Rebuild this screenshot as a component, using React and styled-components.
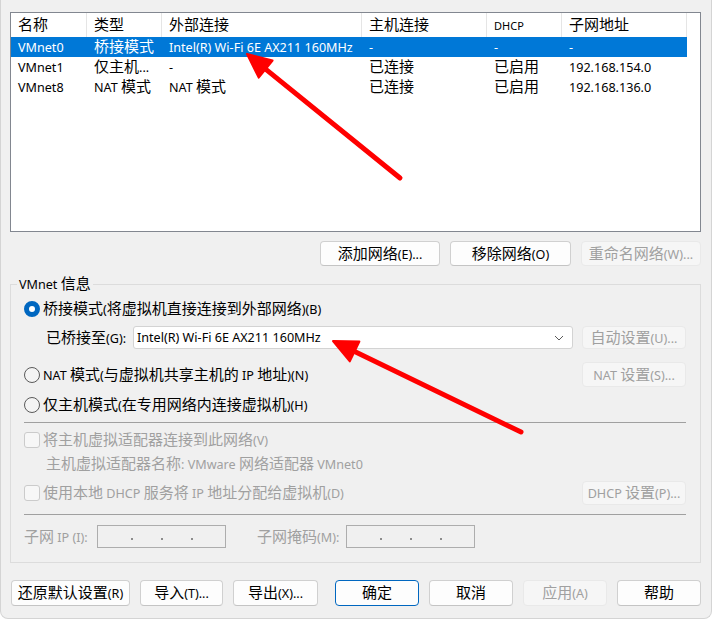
import React from 'react';
import styled, { createGlobalStyle } from 'styled-components';

const GlobalStyle = createGlobalStyle`
  html, body {
    margin: 0;
    padding: 0;
    background: #ffffff;
  }
  body {
    font-family: "Noto Sans", "Noto Sans CJK SC", sans-serif;
    font-size: 12.6px;
    color: #000;
  }
`;

// CJK runs are drawn a little larger than the latin text, as on Windows
const HAN = /([\u2e80-\u9fff\uff00-\uffef]+)/;

const Han = styled.span`
  font-family: "Noto Sans CJK SC", sans-serif;
  font-size: 15px;
  line-height: 1;
`;

const Text = styled.span`
  position: relative;
  top: 1px;
  white-space: pre;
`;

const txt = (s) => (
  <Text>{s.split(HAN).map((p, i) => (i % 2 ? <Han key={i}>{p}</Han> : p))}</Text>
);

const Window = styled.div`
  position: relative;
  box-sizing: border-box;
  width: 712px;
  height: 619px;
  background: #f0f0f0;
  border: 1px solid #d4d4d4;
  border-top: none;
  border-radius: 0 0 8px 8px;
  padding: 12px 10px 0 9px;
  overflow: hidden;
  line-height: 20px;
`;

const ListView = styled.div`
  box-sizing: border-box;
  height: 220px;
  border: 1px solid #828790;
  background: #fff;
`;

const ListRow = styled.div`
  display: grid;
  grid-template-columns: 76px 75px 200px 125px 75px 125px;
  width: 676px;
  height: ${(p) => (p.$head ? 24 : 20)}px;
  background: ${(p) => (p.$selected ? '#0078d7' : 'transparent')};
  color: ${(p) => (p.$selected ? '#fff' : '#000')};
`;

const Cell = styled.div`
  box-sizing: border-box;
  display: flex;
  align-items: center;
  padding-left: 7px;
  white-space: nowrap;
  border-right: ${(p) => (p.$head ? '1px solid #e5e5e5' : 'none')};
  font-size: ${(p) => (p.$small ? '11px' : 'inherit')};
`;

const ButtonBar = styled.div`
  display: flex;
  justify-content: flex-end;
  gap: 10px;
  margin-top: 9px;
`;

const Button = styled.button`
  box-sizing: border-box;
  flex: none;
  width: ${(p) => p.$w}px;
  height: ${(p) => p.$h || 25}px;
  padding: 0;
  font: inherit;
  line-height: 20px;
  display: flex;
  align-items: center;
  justify-content: center;
  white-space: nowrap;
  background: ${(p) => (p.disabled ? '#f6f6f6' : '#fdfdfd')};
  border: 1px solid ${(p) => (p.disabled ? '#e9e9e9' : p.$primary ? '#0067c0' : '#d0d0d0')};
  border-bottom-color: ${(p) => (p.disabled ? '#e9e9e9' : p.$primary ? '#0067c0' : '#c4c4c4')};
  border-radius: 4px;
  color: ${(p) => (p.disabled ? '#a0a0a0' : '#000')};
  margin-left: ${(p) => (p.$push ? 'auto' : '0')};
`;

const Group = styled.fieldset`
  margin: 8px 0 0 0;
  padding: 0;
  min-width: 0;
  border: 1px solid #dcdcdc;
`;

const Legend = styled.legend`
  margin-left: 6px;
  padding: 0 2px;
  height: 20px;
  line-height: 20px;
`;

const GroupBody = styled.div`
  display: flex;
  flex-direction: column;
  padding: 3px 14px 14px 13px;
`;

const Row = styled.div`
  display: flex;
  align-items: center;
  height: ${(p) => p.$h}px;
  margin-top: ${(p) => p.$top || 0}px;
  color: ${(p) => (p.$muted ? '#a0a0a0' : '#000')};
  padding-left: ${(p) => p.$indent || 0}px;
  white-space: nowrap;
`;

const Separator = styled.div`
  height: 0;
  border-top: 1px solid #a0a0a0;
  margin-top: ${(p) => p.$top}px;
`;

const Radio = styled.span`
  box-sizing: border-box;
  flex: none;
  width: 16px;
  height: 16px;
  border-radius: 50%;
  margin-right: 3px;
  border: ${(p) => (p.$on ? '5px solid #0067c0' : '1px solid #5a5a5a')};
  background: ${(p) => (p.$on ? '#fff' : '#f4f4f4')};
`;

const Check = styled.span`
  box-sizing: border-box;
  flex: none;
  width: 16px;
  height: 16px;
  border-radius: 3px;
  margin-right: 3px;
  border: 1px solid #cbcbcb;
  background: #f7f7f7;
`;

const Label = styled.span`
  flex: 1;
  padding-left: 22px;
`;

const Select = styled.div`
  box-sizing: border-box;
  flex: none;
  width: 440px;
  height: 23px;
  display: flex;
  align-items: center;
  justify-content: space-between;
  padding: 0 8px 0 3px;
  background: #fff;
  border: 1px solid #d3d3d3;
  border-radius: 3px;
  margin-right: 9px;
`;

const FieldLabel = styled.span`
  flex: none;
  width: ${(p) => p.$w}px;
`;

const IpBox = styled.div`
  box-sizing: border-box;
  flex: none;
  width: 129px;
  height: 23px;
  display: flex;
  align-items: center;
  justify-content: center;
  gap: 28px;
  border: 1px solid #adadad;
  background: #f0f0f0;
  margin-right: ${(p) => p.$gap || 0}px;
`;

const IpDot = styled.span`
  width: 2px;
  height: 2px;
  margin-top: 5px;
  background: #8c8c8c;
`;

const BottomBar = styled.div`
  display: flex;
  gap: 10px;
  margin-top: 17px;
  padding-left: 1px;
`;

const Overlay = styled.svg`
  position: absolute;
  left: -1px;
  top: 0;
  pointer-events: none;
`;

const columns = ['名称', '类型', '外部连接', '主机连接', 'DHCP', '子网地址'];

const networks = [
  { id: 0, cells: ['VMnet0', '桥接模式', 'Intel(R) Wi-Fi 6E AX211 160MHz', '-', '-', '-'], selected: true },
  { id: 1, cells: ['VMnet1', '仅主机...', '-', '已连接', '已启用', '192.168.154.0'] },
  { id: 8, cells: ['VMnet8', 'NAT 模式', 'NAT 模式', '已连接', '已启用', '192.168.136.0'] },
];

const arrows = [
  { from: [400, 178], to: [247, 54] },
  { from: [521, 432], to: [333, 341] },
];

const Arrow = ({ from, to }) => {
  const dx = to[0] - from[0];
  const dy = to[1] - from[1];
  const len = Math.hypot(dx, dy);
  const ux = dx / len;
  const uy = dy / len;
  const bx = to[0] - ux * 24;
  const by = to[1] - uy * 24;
  const nx = -uy * 11;
  const ny = ux * 11;
  return (
    <g>
      <line x1={from[0]} y1={from[1]} x2={bx + ux * 4} y2={by + uy * 4} stroke="#ff0000" strokeWidth="5" strokeLinecap="round" />
      <polygon points={`${to[0]},${to[1]} ${bx + nx},${by + ny} ${bx - nx},${by - ny}`} fill="#ff0000" stroke="#ff0000" strokeWidth="2" strokeLinejoin="round" />
    </g>
  );
};

const Chevron = () => (
  <svg width="10" height="6" viewBox="0 0 10 6">
    <path d="M1 1 L5 5 L9 1" fill="none" stroke="#5a5a5a" strokeWidth="1" />
  </svg>
);

const IpField = ({ gap }) => (
  <IpBox $gap={gap}>
    <IpDot />
    <IpDot />
    <IpDot />
  </IpBox>
);

const App = () => (
  <Window>
    <GlobalStyle />
    <ListView>
      <ListRow $head>
        {columns.map((c) => (
          <Cell key={c} $head $small={c === 'DHCP'}>{txt(c)}</Cell>
        ))}
      </ListRow>
      {networks.map((n) => (
        <ListRow key={n.id} $selected={n.selected}>
          {n.cells.map((c, i) => (
            <Cell key={i}>{txt(c)}</Cell>
          ))}
        </ListRow>
      ))}
    </ListView>

    <ButtonBar>
      <Button $w={120}>{txt('添加网络(E)...')}</Button>
      <Button $w={121}>{txt('移除网络(O)')}</Button>
      <Button $w={120} disabled>{txt('重命名网络(W)...')}</Button>
    </ButtonBar>

    <Group>
      <Legend>{txt('VMnet 信息')}</Legend>
      <GroupBody>
        <Row $h={24}>
          <Radio $on />
          {txt('桥接模式(将虚拟机直接连接到外部网络)(B)')}
        </Row>
        <Row $h={23} $top={5}>
          <Label>{txt('已桥接至(G):')}</Label>
          <Select>
            <span>Intel(R) Wi-Fi 6E AX211 160MHz</span>
            <Chevron />
          </Select>
          <Button $w={104} $h={23} disabled>{txt('自动设置(U)...')}</Button>
        </Row>
        <Row $h={25} $top={13}>
          <Radio />
          {txt('NAT 模式(与虚拟机共享主机的 IP 地址)(N)')}
          <Button $w={104} $push disabled>{txt('NAT 设置(S)...')}</Button>
        </Row>
        <Row $h={22} $top={7}>
          <Radio />
          {txt('仅主机模式(在专用网络内连接虚拟机)(H)')}
        </Row>
        <Separator $top={6} />
        <Row $h={22} $top={6} $muted>
          <Check />
          {txt('将主机虚拟适配器连接到此网络(V)')}
        </Row>
        <Row $h={22} $top={2} $indent={22} $muted>
          {txt('主机虚拟适配器名称: VMware 网络适配器 VMnet0')}
        </Row>
        <Row $h={24} $top={6} $muted>
          <Check />
          {txt('使用本地 DHCP 服务将 IP 地址分配给虚拟机(D)')}
          <Button $w={104} $h={24} $push disabled>{txt('DHCP 设置(P)...')}</Button>
        </Row>
        <Separator $top={9} />
        <Row $h={23} $top={10} $muted>
          <FieldLabel $w={73}>{txt('子网 IP (I):')}</FieldLabel>
          <IpField gap={31} />
          <FieldLabel $w={89}>{txt('子网掩码(M):')}</FieldLabel>
          <IpField />
        </Row>
      </GroupBody>
    </Group>

    <BottomBar>
      <Button $w={119} $h={26}>{txt('还原默认设置(R)')}</Button>
      <Button $w={83} $h={26}>{txt('导入(T)...')}</Button>
      <Button $w={85} $h={26}>{txt('导出(X)...')}</Button>
      <Button $w={84} $h={26} $primary $push>{txt('确定')}</Button>
      <Button $w={84} $h={26}>{txt('取消')}</Button>
      <Button $w={84} $h={26} disabled>{txt('应用(A)')}</Button>
      <Button $w={84} $h={26}>{txt('帮助')}</Button>
    </BottomBar>

    <Overlay width="712" height="619" viewBox="0 0 712 619">
      {arrows.map((a, i) => (
        <Arrow key={i} from={a.from} to={a.to} />
      ))}
    </Overlay>
  </Window>
);

export default App;
